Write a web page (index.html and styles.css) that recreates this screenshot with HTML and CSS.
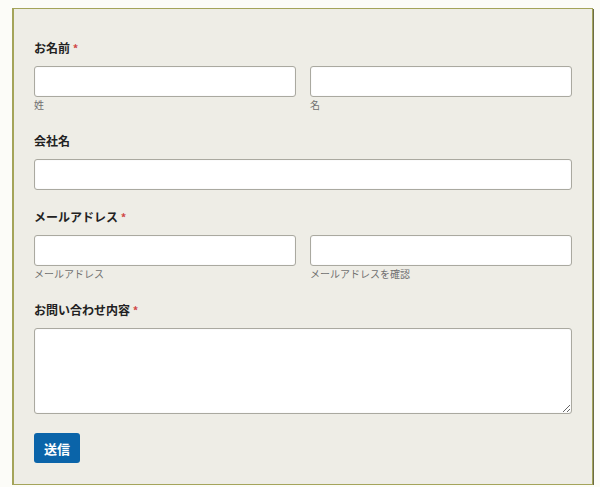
FILE: index.html
```html
<!DOCTYPE html>
<html lang="ja">
<head>
  <meta charset="UTF-8" />
  <meta name="viewport" content="width=device-width, initial-scale=1.0"/>
  <title>お問い合わせ</title>
  <link rel="stylesheet" href="styles.css">
</head>
<body>
  <form class="contact-form">
    <div class="field">
      <label class="field-label">お名前 <span class="required">*</span></label>
      <div class="pair">
        <div class="sub">
          <input type="text">
          <span class="sub-label">姓</span>
        </div>
        <div class="sub">
          <input type="text">
          <span class="sub-label">名</span>
        </div>
      </div>
    </div>

    <div class="field single">
      <label class="field-label">会社名</label>
      <input type="text">
    </div>

    <div class="field">
      <label class="field-label">メールアドレス <span class="required">*</span></label>
      <div class="pair">
        <div class="sub">
          <input type="email">
          <span class="sub-label">メールアドレス</span>
        </div>
        <div class="sub">
          <input type="email">
          <span class="sub-label">メールアドレスを確認</span>
        </div>
      </div>
    </div>

    <div class="field">
      <label class="field-label">お問い合わせ内容 <span class="required">*</span></label>
      <textarea></textarea>
    </div>

    <button type="button" class="submit">送信</button>
  </form>
</body>
</html>
```

FILE: styles.css
```css
body {
  margin: 0;
  padding: 8px 7px 0 12px;
  background: #fcfcf8;
  font-family: "Noto Sans CJK JP", "Noto Sans", sans-serif;
}
.contact-form {
  width: 581px;
  box-sizing: border-box;
  background: #eeede6;
  border: 1px solid #a4a45a;
  border-left-width: 2px;
  box-shadow: 1px 1px 0 #6b6b45;
  padding: 30px 20px 21px 20px;
}
.field {
  margin-bottom: 19px;
}
.field.single {
  margin-bottom: 18px;
}
.field-label {
  display: block;
  height: 18px;
  line-height: 18px;
  font-size: 12px;
  font-weight: bold;
  color: #222;
  margin-bottom: 9px;
}
.required {
  color: #d04848;
  font-size: 11px;
}
.pair {
  display: flex;
  gap: 14px;
}
.sub {
  flex: 1;
  display: flex;
  flex-direction: column;
}
.sub-label {
  font-size: 10px;
  line-height: 16px;
  color: #707070;
}
input, textarea {
  display: block;
  width: 100%;
  box-sizing: border-box;
  height: 31px;
  margin: 0;
  border: 1px solid #aaa9a0;
  border-radius: 3px;
  background: #fff;
  box-shadow: inset 0 0 1px #d8d8d0;
  font-family: inherit;
}
textarea {
  height: 86px;
  resize: both;
}
.submit {
  display: block;
  width: 46px;
  height: 30px;
  padding: 0;
  border: none;
  border-radius: 3px;
  background: #0a64a9;
  color: #fff;
  font-family: inherit;
  font-size: 13px;
  font-weight: bold;
  cursor: pointer;
}
```
